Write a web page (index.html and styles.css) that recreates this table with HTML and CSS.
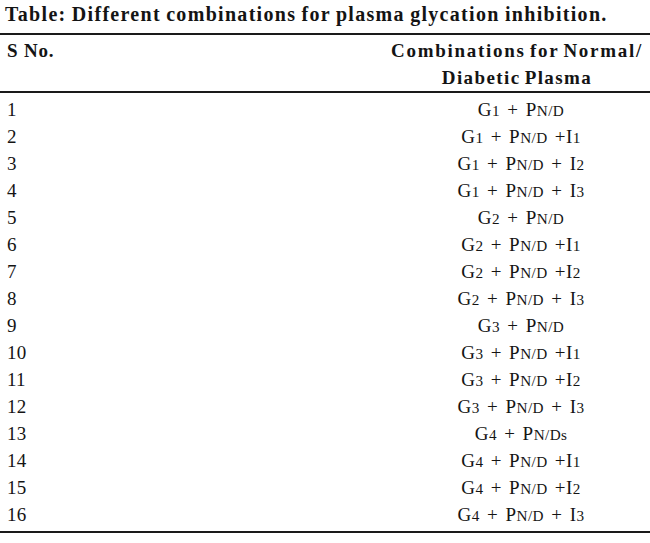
FILE: index.html
```html
<!DOCTYPE html>
<html>
<head>
<meta charset="utf-8">
<link rel="stylesheet" href="styles.css">
</head>
<body>
<div class="page">
  <div class="title">Table: Different combinations for plasma glycation inhibition.</div>
  <table class="tbl">
    <thead>
      <tr>
        <th class="c1">S No.</th>
        <th class="c2"><span class="h1">Combinations for Normal/</span><br><span class="h2">Diabetic Plasma</span></th>
      </tr>
    </thead>
    <tbody>
      <tr><td class="c1">1</td><td class="c2">G<span class="s">1</span> + P<span class="s">N/D</span></td></tr>
      <tr><td class="c1">2</td><td class="c2">G<span class="s">1</span> + P<span class="s">N/D</span> +I<span class="s">1</span></td></tr>
      <tr><td class="c1">3</td><td class="c2">G<span class="s">1</span> + P<span class="s">N/D</span> + I<span class="s">2</span></td></tr>
      <tr><td class="c1">4</td><td class="c2">G<span class="s">1</span> + P<span class="s">N/D</span> + I<span class="s">3</span></td></tr>
      <tr><td class="c1">5</td><td class="c2">G<span class="s">2</span> + P<span class="s">N/D</span></td></tr>
      <tr><td class="c1">6</td><td class="c2">G<span class="s">2</span> + P<span class="s">N/D</span> +I<span class="s">1</span></td></tr>
      <tr><td class="c1">7</td><td class="c2">G<span class="s">2</span> + P<span class="s">N/D</span> +I<span class="s">2</span></td></tr>
      <tr><td class="c1">8</td><td class="c2">G<span class="s">2</span> + P<span class="s">N/D</span> + I<span class="s">3</span></td></tr>
      <tr><td class="c1">9</td><td class="c2">G<span class="s">3</span> + P<span class="s">N/D</span></td></tr>
      <tr><td class="c1">10</td><td class="c2">G<span class="s">3</span> + P<span class="s">N/D</span> +I<span class="s">1</span></td></tr>
      <tr><td class="c1">11</td><td class="c2">G<span class="s">3</span> + P<span class="s">N/D</span> +I<span class="s">2</span></td></tr>
      <tr><td class="c1">12</td><td class="c2">G<span class="s">3</span> + P<span class="s">N/D</span> + I<span class="s">3</span></td></tr>
      <tr><td class="c1">13</td><td class="c2">G<span class="s">4</span> + P<span class="s">N/Ds</span></td></tr>
      <tr><td class="c1">14</td><td class="c2">G<span class="s">4</span> + P<span class="s">N/D</span> +I<span class="s">1</span></td></tr>
      <tr><td class="c1">15</td><td class="c2">G<span class="s">4</span> + P<span class="s">N/D</span> +I<span class="s">2</span></td></tr>
      <tr><td class="c1">16</td><td class="c2">G<span class="s">4</span> + P<span class="s">N/D</span> + I<span class="s">3</span></td></tr>
    </tbody>
  </table>
</div>
</body>
</html>
```

FILE: styles.css
```css
html, body {
  margin: 0;
  padding: 0;
  background: #ffffff;
}
.page {
  width: 650px;
  height: 543px;
  overflow: hidden;
  font-family: "Liberation Serif", "Times New Roman", serif;
  color: #141414;
}
.title {
  font-weight: bold;
  font-size: 20px;
  line-height: 24px;
  padding: 2px 0 0 5px;
  height: 33px;
  box-sizing: border-box;
  white-space: nowrap;
  letter-spacing: 1.3px;
  word-spacing: -1px;
}
.tbl {
  width: 650px;
  border-collapse: collapse;
  border-top: 2px solid #1a1a1a;
  border-bottom: 2px solid #1a1a1a;
}
.tbl thead tr {
  border-bottom: 2px solid #1a1a1a;
}
.tbl th {
  font-weight: bold;
  font-size: 19px;
  line-height: 27px;
  vertical-align: top;
  padding: 2px 0 0 0;
}
.tbl th.c1 {
  text-align: left;
  padding-left: 7px;
  letter-spacing: 0.8px;
}
.tbl th.c2 {
  text-align: center;
  padding-right: 4px;
}
.h1 {
  letter-spacing: 1.7px;
  word-spacing: -2px;
}
.h2 {
  letter-spacing: 1.4px;
  word-spacing: -2px;
}
.c1 {
  width: 381px;
}
.tbl td {
  font-size: 19px;
  height: 27px;
  line-height: 27px;
  padding: 0;
  vertical-align: middle;
}
.tbl td.c1 {
  padding-left: 7px;
  text-align: left;
  letter-spacing: 0.3px;
}
.tbl td.c2 {
  text-align: center;
  padding-left: 4px;
  letter-spacing: 0.5px;
  word-spacing: 2px;
}
.tbl tbody tr:first-child td {
  padding-top: 3px;
}
.tbl tbody tr:last-child td {
  padding-bottom: 3px;
}
.s {
  font-size: 0.8em;
  line-height: 1;
  letter-spacing: 0.4px;
}
```
